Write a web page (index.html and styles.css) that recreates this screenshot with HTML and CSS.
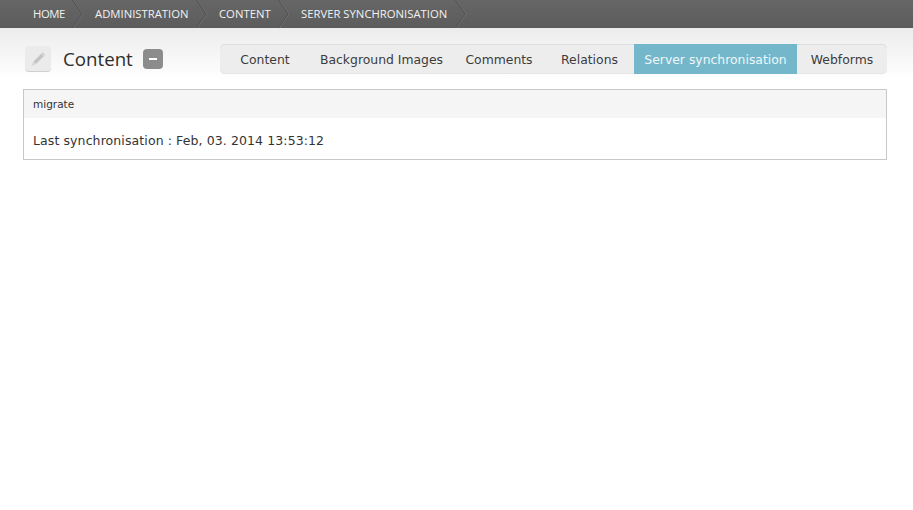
FILE: index.html
```html
<!DOCTYPE html>
<html lang="en">
<head>
<meta charset="utf-8">
<title>Server synchronisation</title>
<link rel="stylesheet" href="styles.css">
</head>
<body>
<nav class="crumbs">
  <a class="crumb crumb-home">HOME<svg class="chev" width="11" height="28" viewBox="0 0 11 28"><path d="M0.5 0 L10 14 L0.5 28" fill="none" stroke="#4f4f4f" stroke-width="1"/><path d="M1.5 0 L11 14 L1.5 28" fill="none" stroke="#6e6e6e" stroke-width="1"/></svg></a>
  <a class="crumb crumb-admin">ADMINISTRATION<svg class="chev" width="11" height="28" viewBox="0 0 11 28"><path d="M0.5 0 L10 14 L0.5 28" fill="none" stroke="#4f4f4f" stroke-width="1"/><path d="M1.5 0 L11 14 L1.5 28" fill="none" stroke="#6e6e6e" stroke-width="1"/></svg></a>
  <a class="crumb crumb-content">CONTENT<svg class="chev" width="11" height="28" viewBox="0 0 11 28"><path d="M0.5 0 L10 14 L0.5 28" fill="none" stroke="#4f4f4f" stroke-width="1"/><path d="M1.5 0 L11 14 L1.5 28" fill="none" stroke="#6e6e6e" stroke-width="1"/></svg></a>
  <a class="crumb crumb-server">SERVER SYNCHRONISATION<svg class="chev" width="11" height="28" viewBox="0 0 11 28"><path d="M0.5 0 L10 14 L0.5 28" fill="none" stroke="#4f4f4f" stroke-width="1"/><path d="M1.5 0 L11 14 L1.5 28" fill="none" stroke="#6e6e6e" stroke-width="1"/></svg></a>
</nav>
<header class="head">
  <div class="title-group">
    <span class="page-icon">
      <svg width="18" height="18" viewBox="0 0 18 18"><path d="M13.5 2.5 L16 5 L7 14 L4.5 11.5 Z" fill="#c4c4c4"/><path d="M4.5 11.5 L7 14 L2.5 16 Z" fill="#d4d4d4"/><path d="M12.5 3.5 L15 6" stroke="#f0f0f0" stroke-width="0.8"/></svg>
    </span>
    <h1 class="title">Content</h1>
    <span class="collapse"><span class="collapse-bar"></span></span>
  </div>
  <ul class="tabs">
    <li class="tab">Content</li>
    <li class="tab">Background Images</li>
    <li class="tab">Comments</li>
    <li class="tab">Relations</li>
    <li class="tab tab-active">Server synchronisation</li>
    <li class="tab">Webforms</li>
  </ul>
</header>
<section class="panel">
  <div class="panel-head">migrate</div>
  <p class="panel-body">Last synchronisation : Feb, 03. 2014 13:53:12</p>
</section>
</body>
</html>
```
FILE: styles.css
```css
* { box-sizing: border-box; }
html, body { margin: 0; padding: 0; background: #fff; }
body { height: 510px; overflow: hidden; font-family: "DejaVu Sans", "Noto Sans", sans-serif; color: #333; }

.crumbs {
  display: flex;
  height: 28px;
  padding-left: 33px;
  background: linear-gradient(#666666, #5c5c5c);
  overflow: hidden;
}
.crumb {
  display: flex;
  align-items: center;
  justify-content: space-between;
  flex: none;
  height: 28px;
  padding-bottom: 2px;
  font-family: "Open Sans", "Liberation Sans", sans-serif;
  font-size: 11.3px;
  color: #f2f2f2;
  white-space: nowrap;
}
.chev { flex: none; align-self: flex-start; margin-right: 12px; overflow: visible; }
.crumb-home { width: 62px; letter-spacing: -0.4px; }
.crumb-admin { width: 124px; }
.crumb-content { width: 82px; }
.crumb-server { width: 177px; }

.head {
  display: flex;
  justify-content: space-between;
  height: 61px;
  padding: 16px 26px 0 25px;
  background: linear-gradient(#ececec, #ffffff 85%);
}
.title-group { display: flex; align-items: flex-start; }
.page-icon {
  display: flex;
  align-items: center;
  justify-content: center;
  width: 26px;
  height: 26px;
  margin-top: 2px;
  background: #ebebeb;
  border-radius: 4px;
  border-bottom: 1px solid #cfcfcf;
}
.title {
  margin: 0 0 0 12px;
  font-family: "Open Sans", "Liberation Sans", sans-serif;
  font-size: 18.7px;
  font-weight: 400;
  line-height: 30px;
  color: #2e2e2e;
}
.collapse {
  display: flex;
  align-items: center;
  justify-content: center;
  width: 20px;
  height: 20px;
  margin: 5px 0 0 10px;
  background: #8c8c8c;
  border-radius: 4px;
}
.collapse-bar { width: 8px; height: 2px; background: #fff; }

.tabs {
  display: grid;
  grid-template-columns: 90px 143px 92px 89px 163px 90px;
  height: 30px;
  width: 667px;
  margin: 0;
  padding: 0;
  list-style: none;
  background: #ededed;
  border-radius: 5px;
  box-shadow: inset 0 1px 0 #dcdcdc, inset 0 -1px 0 #e4e4e4;
  overflow: hidden;
}
.tab {
  display: flex;
  align-items: center;
  justify-content: center;
  font-size: 12.4px;
  color: #3c3c3c;
  white-space: nowrap;
}
.tab-active {
  background: #74b7ca;
  color: #eef7fa;
}

.panel {
  width: 864px;
  height: 71px;
  margin-left: 23px;
  border: 1px solid #c8c8c8;
}
.panel-head {
  height: 28px;
  padding-left: 9px;
  font-size: 10.5px;
  line-height: 28px;
  color: #333;
  background: #f5f5f5;
}
.panel-body {
  margin: 0;
  padding-left: 9px;
  font-size: 12.5px;
  line-height: 46px;
  letter-spacing: 0.1px;
  color: #333;
}
```
